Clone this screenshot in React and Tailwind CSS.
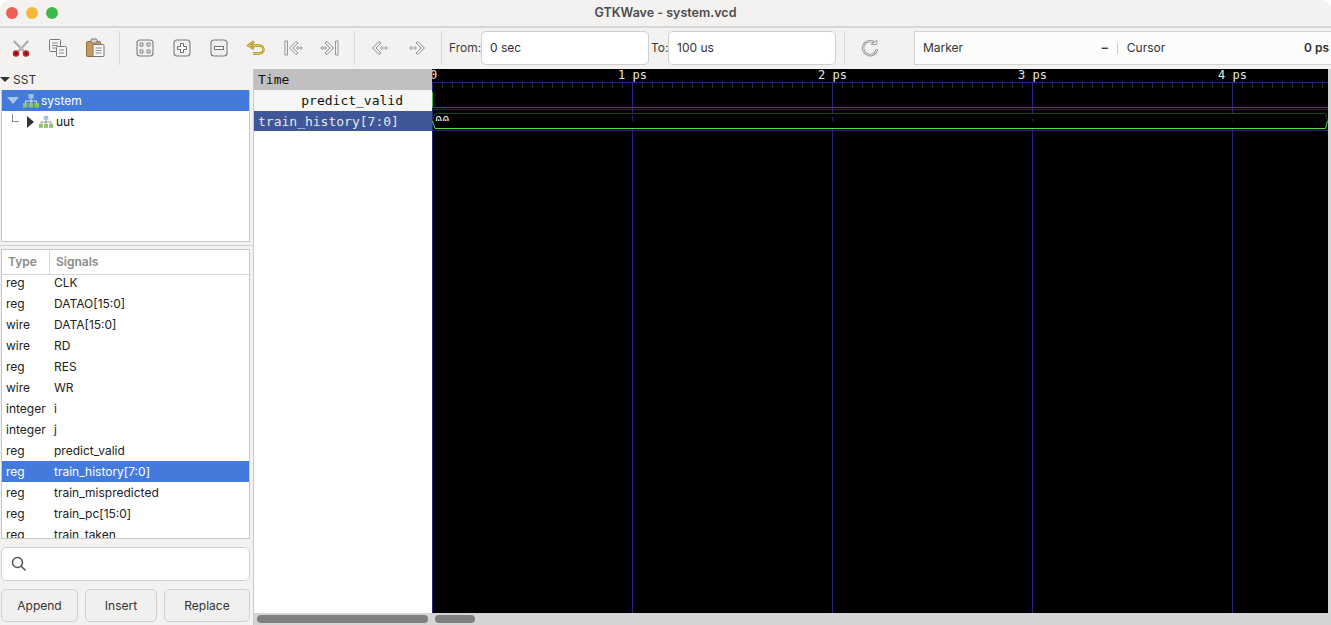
const signals = [
  ['reg', 'CLK'],
  ['reg', 'DATAO[15:0]'],
  ['wire', 'DATA[15:0]'],
  ['wire', 'RD'],
  ['reg', 'RES'],
  ['wire', 'WR'],
  ['integer', 'i'],
  ['integer', 'j'],
  ['reg', 'predict_valid'],
  ['reg', 'train_history[7:0]'],
  ['reg', 'train_mispredicted'],
  ['reg', 'train_pc[15:0]'],
  ['reg', 'train_taken'],
];

const mono = "font-['DejaVu_Sans_Mono',monospace]";

// toolbar icons, all on a 20x20 box
function Cut() {
  return (
    <svg width="20" height="20" viewBox="0 0 20 20" fill="none">
      <path d="M3 3 L12.5 13 M17 3 L7.5 13" stroke="#9a9a9a" strokeWidth="2" />
      <path d="M3.5 2.5 L12.5 13 M16.5 2.5 L7.5 13" stroke="#dcdcdc" strokeWidth="0.7" />
      <circle cx="5" cy="15.5" r="3.2" fill="#c0201f" />
      <circle cx="15" cy="15.5" r="3.2" fill="#c0201f" />
      <circle cx="5" cy="15.5" r="1.1" fill="#3a1010" />
      <circle cx="15" cy="15.5" r="1.1" fill="#3a1010" />
    </svg>
  );
}

function Copy() {
  return (
    <svg width="20" height="20" viewBox="0 0 20 20" fill="none">
      <rect x="1.5" y="1.5" width="11" height="12" rx="1" fill="#f5f5f5" stroke="#7a7a7a" />
      <path d="M4 5h6M4 7.5h6M4 10h4" stroke="#8a8a8a" />
      <rect x="8.5" y="8.5" width="10" height="10" rx="1" fill="#f5f5f5" stroke="#7a7a7a" />
      <path d="M11 12h5M11 15h5" stroke="#8a8a8a" />
    </svg>
  );
}

function Paste() {
  return (
    <svg width="20" height="20" viewBox="0 0 20 20" fill="none">
      <rect x="1.5" y="3.5" width="14" height="15" rx="1" fill="#c79a5a" stroke="#8a6a35" />
      <rect x="6" y="1" width="6" height="4" rx="1" fill="#d8d8d8" stroke="#777" />
      <rect x="8" y="6.5" width="11" height="12" rx="1" fill="#f7f7f7" stroke="#777" />
      <path d="M10.5 10h6M10.5 12.5h6M10.5 15h6" stroke="#888" />
    </svg>
  );
}

function KeyBox({ children }) {
  return (
    <svg width="18" height="18" viewBox="0 0 18 18" fill="none">
      <rect x="1" y="1" width="16" height="16" rx="3" fill="#efefef" stroke="#7d7d7d" strokeWidth="1.1" />
      {children}
    </svg>
  );
}

function Arrows({ dir, bar }) {
  const flip = dir === 'right' ? 'translate(20 0) scale(-1 1)' : undefined;
  return (
    <svg width="20" height="20" viewBox="0 0 20 20" fill="none">
      <g transform={flip}>
        {bar && <rect x="2" y="3" width="2.4" height="14" fill="#f2f2f2" stroke="#808080" strokeWidth="0.8" />}
        <path d={bar ? 'M13 3.5 L6.5 10 L13 16.5 L15 15 L10 10 L15 5 Z' : 'M9 3.5 L2.5 10 L9 16.5 L11 15 L6 10 L11 5 Z'} fill="#f2f2f2" stroke="#808080" strokeWidth="0.9" />
        <circle cx={bar ? 15 : 12} cy="10" r="1.2" fill="#f2f2f2" stroke="#808080" strokeWidth="0.7" />
        <circle cx={bar ? 18 : 16} cy="10" r="1.2" fill="#f2f2f2" stroke="#808080" strokeWidth="0.7" />
      </g>
    </svg>
  );
}

function Undo() {
  return (
    <svg width="20" height="20" viewBox="0 0 20 20" fill="none">
      <path d="M8 3.5 L2.5 7.5 L8 11 M3 7.5 H13 C19 7.5 19 15.5 13 15.5 H7" stroke="#a88a1e" strokeWidth="2.4" />
      <path d="M8 3.5 L2.5 7.5 L8 11 M3 7.5 H13 C19 7.5 19 15.5 13 15.5 H7" stroke="#ecd060" strokeWidth="0.9" />
    </svg>
  );
}

function Reload() {
  return (
    <svg width="18" height="18" viewBox="0 0 18 18" fill="none">
      <path d="M14 4.2 A7 7 0 1 0 16 10" stroke="#8f8f8f" strokeWidth="2.4" />
      <path d="M14 4.2 A7 7 0 1 0 16 10" stroke="#efefef" strokeWidth="0.9" />
      <path d="M10 5.5 H15.8 V1 Z" fill="#efefef" stroke="#8f8f8f" strokeWidth="0.8" />
    </svg>
  );
}

function Hierarchy({ selected }) {
  return (
    <svg width="16" height="14" viewBox="0 0 16 14" fill="none">
      <rect x="5.5" y="0" width="5" height="4.5" fill="#9cc0ea" />
      <path d="M8 4.5V7M2.5 9V7H13.5V9M8 7V9" stroke={selected ? '#e6e6e6' : '#8a8a8a'} />
      <rect x="0" y="9" width="4.5" height="4.5" fill="#8cc46a" />
      <rect x="5.75" y="9" width="4.5" height="4.5" fill="#8cc46a" />
      <rect x="11.5" y="9" width="4.5" height="4.5" fill="#8cc46a" />
    </svg>
  );
}

function Toolbar() {
  const cell = 'w-[37px] h-full flex items-center justify-center';
  const sep = 'w-px h-[34px] bg-[#d9d9d7] mx-[6px]';
  return (
    <div className="h-[41px] flex items-center pl-[2px] bg-[#f3f2f0] border-b border-[#f3f2f0]">
      <div className={cell}><Cut /></div>
      <div className={cell}><Copy /></div>
      <div className={cell}><Paste /></div>
      <div className={sep} />
      <div className={cell}>
        <KeyBox>
          <path d="M4 4h3v3H4zM11 4h3v3h-3zM4 11h3v3H4zM11 11h3v3h-3z" stroke="#777" strokeWidth="0.9" />
        </KeyBox>
      </div>
      <div className={cell}>
        <KeyBox>
          <path d="M7.5 4.5h3v3h3v3h-3v3h-3v-3h-3v-3h3z" fill="#fff" stroke="#707070" />
        </KeyBox>
      </div>
      <div className={cell}>
        <KeyBox>
          <rect x="4.5" y="7.5" width="9" height="3" fill="#fff" stroke="#707070" />
        </KeyBox>
      </div>
      <div className={cell}><Undo /></div>
      <div className={cell}><Arrows dir="left" bar /></div>
      <div className={cell}><Arrows dir="right" bar /></div>
      <div className={sep} />
      <div className={cell}><Arrows dir="left" /></div>
      <div className={cell}><Arrows dir="right" /></div>
      <div className={sep} />
      <span className="ml-[1px] text-[12px] text-[#3c3c3c] w-[32px]">From:</span>
      <div className="w-[168px] h-[34px] bg-white border border-[#cfcfcd] rounded-[5px] flex items-center pl-2 text-[12px] text-[#333]">0 sec</div>
      <span className="text-[12px] text-[#3c3c3c] w-[17px] ml-[2px]">To:</span>
      <div className="w-[168px] h-[34px] bg-white border border-[#cfcfcd] rounded-[5px] flex items-center pl-2 text-[12px] text-[#333]">100 us</div>
      <div className="w-px h-[34px] bg-[#d9d9d7] ml-2" />
      <div className="w-[49px] flex justify-center"><Reload /></div>
      <div className="ml-[20px] flex-1 h-[34px] bg-[#fcfcfc] border border-[#d2d2d0] border-r-0 flex items-center pl-2 pr-[2px] text-[12px] text-[#333]">
        <span>Marker</span>
        <span className="ml-auto font-bold">–</span>
        <div className="w-px h-[11px] bg-[#c8c8c8] mx-[9px]" />
        <span>Cursor</span>
        <span className="ml-auto font-semibold">0 ps</span>
      </div>
    </div>
  );
}

function SidePanel() {
  return (
    <div className="w-[254px] shrink-0 flex flex-col bg-[#f3f2f0] border-r border-[#c9c9c7] pl-px pr-[3px] text-[12px] text-[#222]">
      <div className="h-[21px] flex items-center gap-[3px]">
        <div className="w-0 h-0 -ml-px border-x-[5px] border-x-transparent border-t-[5px] border-t-[#333]" />
        <span className="text-[#333]">SST</span>
      </div>
      <div className="h-[152px] bg-white border border-[#c8c8c6] border-t-0">
        <div className="h-[21px] bg-[#437adb] flex items-center text-white pl-[5px]">
          <div className="w-0 h-0 border-x-[6px] border-x-transparent border-t-[7px] border-t-[#a9c6f0]" />
          <span className="ml-[4px]"><Hierarchy selected /></span>
          <span className="ml-[2px]">system</span>
        </div>
        <div className="h-[21px] flex items-center">
          <div className="ml-[10px] mb-[7px] w-[7px] h-[8px] border-l border-b border-[#8a8a8a]" />
          <div className="ml-[8px] w-0 h-0 border-y-[6px] border-y-transparent border-l-[7px] border-l-[#333]" />
          <span className="ml-[4px] scale-90"><Hierarchy /></span>
          <span className="ml-[2px] text-[#111]">uut</span>
        </div>
      </div>
      <div className="h-[7px] flex items-center -mr-[3px] -ml-px">
        <div className="w-full h-px bg-[#cfcfcd]" />
      </div>
      <div className="h-[290px] bg-white border border-[#c8c8c6] flex flex-col overflow-hidden">
        <div className="h-[25px] shrink-0 flex items-center border-b border-[#d6d6d4] bg-white text-[12px] font-semibold text-[#8a8a8a] relative z-10">
          <div className="w-[48px] h-full flex items-center pl-[6px] border-r border-[#d6d6d4]">Type</div>
          <div className="pl-[6px]">Signals</div>
        </div>
        <div className="-mt-[3px]">
          {signals.map(([type, name], i) => (
            <div key={name} className={`h-[21px] flex items-center ${i === 9 ? 'bg-[#437adb] text-white' : ''}`}>
              <span className="w-[52px] pl-[4px]">{type}</span>
              <span>{name}</span>
            </div>
          ))}
        </div>
      </div>
      <div className="mt-2 h-[34px] bg-white border border-[#cfcfcd] rounded-[5px] flex items-center pl-[9px]">
        <svg width="16" height="16" viewBox="0 0 16 16" fill="none">
          <circle cx="6.5" cy="6.5" r="5" stroke="#555" strokeWidth="1.5" />
          <path d="M10.2 10.2 L14.5 14.5" stroke="#555" strokeWidth="1.6" />
        </svg>
      </div>
      <div className="mt-2 flex justify-between">
        {[['Append', 'w-[77px]'], ['Insert', 'w-[72px]'], ['Replace', 'w-[86px]']].map(([label, w]) => (
          <div key={label} className={`${w} h-[33px] flex items-center justify-center rounded-[5px] border border-[#cfcfcd] bg-[#f1f0ee] text-[#333]`}>{label}</div>
        ))}
      </div>
    </div>
  );
}

function WaveCanvas() {
  const ticks = Array.from({ length: 90 }, (_, i) => i * 10 + 0.5);
  const majors = [0.5, 200.5, 400.5, 600.5, 800.5];
  return (
    <svg width="896" height="544" viewBox="0 0 896 544" className="block bg-black shrink-0">
      {ticks.map(x => <path key={x} d={`M${x} 13V19`} stroke="#24246e" />)}
      <path d="M0 13.5H896M0 40.5H896M0 61.5H896" stroke="#24247c" />
      {majors.map(x => <path key={x} d={`M${x} 13V544`} stroke="#24247c" />)}
      <g fill="#e8e8e8" fontFamily="'DejaVu Sans Mono', monospace" fontSize="12">
        <text x="-2" y="10">0</text>
        <text x="186" y="10">1 ps</text>
        <text x="386" y="10">2 ps</text>
        <text x="586" y="10">3 ps</text>
        <text x="786" y="10">4 ps</text>
        <text x="3" y="56">00</text>
      </g>
      <path d="M0 38.5H896" stroke="#1f6a1f" />
      <path d="M0.5 23V38" stroke="#35c035" />
      <path d="M3 44.5H893.5L895.5 52" stroke="#1c4a14" />
      <path d="M0.5 52L3 59.5H893.5L895.5 52" stroke="#4fe04f" />
      <path d="M0.5 52L3 44.5" stroke="#1c4a14" />
    </svg>
  );
}

function WavePanel() {
  return (
    <div className="flex-1 flex flex-col min-w-0">
      <div className="flex h-[544px]">
        <div className={`w-[178px] shrink-0 bg-white text-[13px] leading-none text-[#111] ${mono}`}>
          <div className="h-[21px] bg-[#c0c0c0] flex items-center pl-[4px]">Time</div>
          <div className="h-[21px] bg-[#f6f6f6] flex items-center justify-end pr-[29px]">predict_valid</div>
          <div className="h-[20px] bg-[#3f5698] text-[#e8e8e8] flex items-center pl-[4px]">train_history[7:0]</div>
        </div>
        <WaveCanvas />
        <div className="flex-1 bg-[#d6d6d6]" />
      </div>
      <div className="h-[12px] bg-[#d4d4d4] flex items-center">
        <div className="ml-[3px] w-[171px] h-[8px] rounded-full bg-[#808080]" />
        <div className="ml-[7px] w-[40px] h-[8px] rounded-full bg-[#808080]" />
      </div>
    </div>
  );
}

export default function App() {
  return (
    <div className="w-[1331px] h-[625px] overflow-hidden bg-[#f3f2f0] rounded-t-[10px] font-['Inter','Liberation_Sans',sans-serif] flex flex-col">
      <div className="h-[28px] shrink-0 relative flex items-center justify-center border-b-2 border-[#d7d6d4] bg-[#f3f2f0]">
        <div className="absolute left-[6px] top-[7px] flex gap-[8px]">
          <div className="w-[12px] h-[12px] rounded-full bg-[#ee5f57]" />
          <div className="w-[12px] h-[12px] rounded-full bg-[#f6b73e]" />
          <div className="w-[12px] h-[12px] rounded-full bg-[#3fb94a]" />
        </div>
        <span className="text-[12.5px] font-semibold text-[#4b4b4b]">GTKWave - system.vcd</span>
      </div>
      <Toolbar />
      <div className="flex flex-1 min-h-0">
        <SidePanel />
        <WavePanel />
      </div>
    </div>
  );
}
